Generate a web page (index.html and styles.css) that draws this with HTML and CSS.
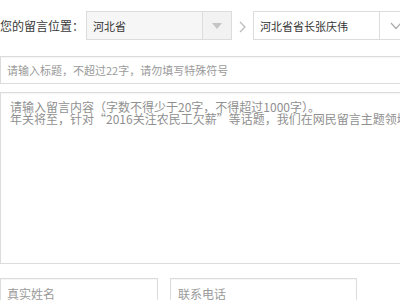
FILE: index.html
```html
<!DOCTYPE html>
<html lang="zh-CN">
<head>
<meta charset="utf-8">
<link rel="stylesheet" href="styles.css">
</head>
<body>
<div class="form">
  <div class="loc-row">
    <span class="loc-label">您的留言位置：</span>
    <div class="select disabled">
      <span class="select-text">河北省</span>
      <span class="select-btn">
        <svg width="10" height="6" viewBox="0 0 10 6"><path d="M0 0H10L5 6Z" fill="#c4c4c4"/></svg>
      </span>
    </div>
    <span class="sep">
      <svg width="7" height="12" viewBox="0 0 7 12"><path d="M1 1L6 6L1 11" fill="none" stroke="#bbb" stroke-width="1.3"/></svg>
    </span>
    <div class="select select-wide">
      <span class="select-text">河北省省长张庆伟</span>
      <span class="select-btn">
        <svg width="12" height="8" viewBox="0 0 12 8"><path d="M1 1L6 6.5L11 1" fill="none" stroke="#aaa" stroke-width="1.2"/></svg>
      </span>
    </div>
  </div>
  <input class="field title" type="text" placeholder="请输入标题，不超过22字，请勿填写特殊符号">
  <textarea class="field content" placeholder="请输入留言内容（字数不得少于20字，不得超过1000字）。&#10;年关将至，针对“2016关注农民工欠薪”等话题，我们在网民留言主题领域中设置了专题"></textarea>
  <div class="contact-row">
    <input class="field name" type="text" placeholder="真实姓名">
    <input class="field phone" type="text" placeholder="联系电话">
  </div>
</div>
</body>
</html>
```

FILE: styles.css
```css
html, body {
  margin: 0;
  padding: 0;
  background: #fff;
  overflow: hidden;
}
body {
  font-family: "Noto Sans CJK SC", "Liberation Sans", sans-serif;
  font-size: 12px;
  color: #333;
}
.form {
  width: 620px;
  padding-top: 11px;
  display: flex;
  flex-direction: column;
}
.loc-row {
  display: flex;
  align-items: center;
  height: 29px;
}
.loc-label {
  width: 86px;
  font-size: 12px;
  color: #3a3a3a;
  white-space: nowrap;
}
.select {
  box-sizing: border-box;
  height: 29px;
  width: 146px;
  border: 1px solid #dcdcdc;
  display: flex;
  align-items: stretch;
  background: #fff;
}
.select.disabled {
  background: #f6f6f6;
}
.select-text {
  flex: 1;
  padding-left: 6px;
  display: flex;
  align-items: center;
  font-size: 11px;
  color: #333;
  white-space: nowrap;
}
.select-btn {
  width: 28px;
  border-left: 1px solid #dcdcdc;
  display: flex;
  align-items: center;
  justify-content: center;
}
.select.disabled .select-btn {
  background: #f2f2f2;
}
.select-wide {
  width: 160px;
}
.select-wide .select-btn {
  width: 32px;
}
.sep {
  width: 21px;
  display: flex;
  justify-content: center;
  align-items: center;
  padding-top: 2px;
}
.field {
  box-sizing: border-box;
  border: 1px solid #dcdcdc;
  box-shadow: inset 0 1px 1px rgba(0,0,0,0.04);
  font-family: "Noto Sans CJK SC", "Liberation Sans", sans-serif;
  font-size: 12px;
  color: #333;
  outline: none;
  margin: 0;
  background: #fff;
}
.field::placeholder {
  color: #9a9a9a;
  opacity: 1;
}
.title {
  margin-top: 16px;
  height: 28px;
  width: 600px;
  padding: 0 6px;
  font-size: 11px;
}
.content {
  margin-top: 8px;
  height: 172px;
  width: 600px;
  padding: 8px 9px;
  line-height: 12px;
  resize: none;
  display: block;
}
.content::placeholder {
  color: #909090;
}
.contact-row {
  margin-top: 14px;
  display: flex;
  gap: 12px;
}
.name {
  width: 158px;
  height: 30px;
  padding: 0 6px;
}
.phone {
  width: 187px;
  height: 30px;
  padding: 0 7px;
}
```
